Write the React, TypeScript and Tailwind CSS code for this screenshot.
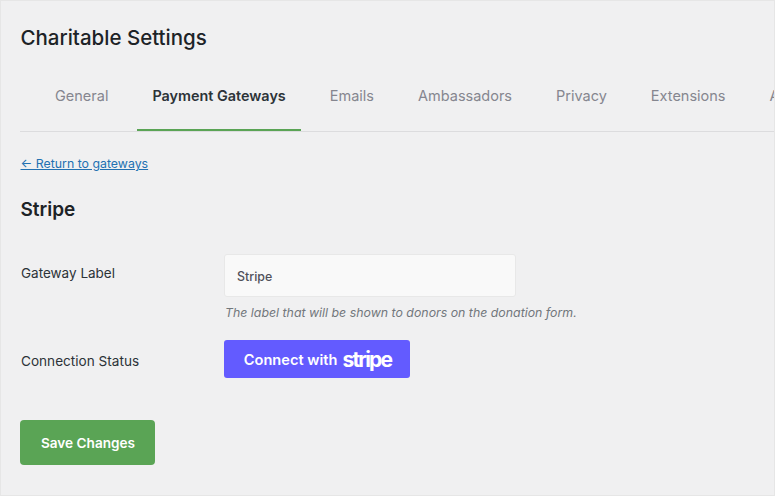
const font = { fontFamily: "Inter, 'Liberation Sans', sans-serif" };

const tabs = ["General", "Payment Gateways", "Emails", "Ambassadors", "Privacy", "Extensions", "Advanced"];

export default function App() {
  return (
    <div
      style={font}
      className="h-[496px] w-[775px] overflow-hidden border border-[#e6e6e6] bg-[#f0f0f1] pl-[19px] text-[#1d2327]"
    >
      <h1 className="mt-[23px] h-7 pl-[0.5px] text-[20.5px] leading-7 font-medium">Charitable Settings</h1>
      <nav className="mt-[29px] flex h-[51px] w-[755px] gap-[14px] overflow-hidden border-b border-[#dcdcde] pl-[20px]">
        {tabs.map((t) => (
          <div
            key={t}
            className={
              t === "Payment Gateways"
                ? "-mb-px shrink-0 border-b-[3px] border-[#5aa455] px-[15px] pt-[5px] text-[14.4px] leading-5 font-semibold text-[#2c3338]"
                : "shrink-0 px-[15px] pt-[5px] text-[14.5px] leading-5 font-normal text-[#85868f]"
            }
          >
            {t}
          </div>
        ))}
      </nav>
      <a className="mt-[24px] block h-4 pl-[0.5px] text-[12.35px] leading-4 text-[#2271b1] underline">← Return to gateways</a>
      <h2 className="mt-[26px] h-6 pl-[0.5px] text-[19px] leading-6 font-semibold">Stripe</h2>
      <div className="mt-[32px] flex">
        <label className="w-[204px] pt-[9px] pl-px text-[13.5px] leading-5 text-[#2c3338]">Gateway Label</label>
        <div>
          <div className="flex h-[43px] w-[292px] items-center rounded-[3px] border border-[#e8e8e8] bg-[#f9f9f9] px-3 pt-1 text-[12.4px] font-medium text-[#50505a]">
            Stripe
          </div>
          <p className="mt-[6px] pl-px text-[12.35px] leading-5 text-[#72777c] italic">
            The label that will be shown to donors on the donation form.
          </p>
        </div>
      </div>
      <div className="mt-[17px] flex items-center">
        <label className="w-[204px] pt-1 pl-px text-[13.6px] leading-5 text-[#2c3338]">Connection Status</label>
        <button className="flex h-[38px] w-[186px] items-center justify-center gap-[5px] rounded-[3px] bg-[#635bff] pt-1 pl-px text-[14.6px] font-semibold text-white">
          Connect with
          <span className="mb-1 text-[21px] leading-none font-bold tracking-[-1.8px]">stripe</span>
        </button>
      </div>
      <button className="mt-[42px] block h-[45px] w-[135px] rounded-[4px] bg-[#5aa455] pt-px pl-px text-[13.6px] font-semibold text-white">
        Save Changes
      </button>
    </div>
  );
}
